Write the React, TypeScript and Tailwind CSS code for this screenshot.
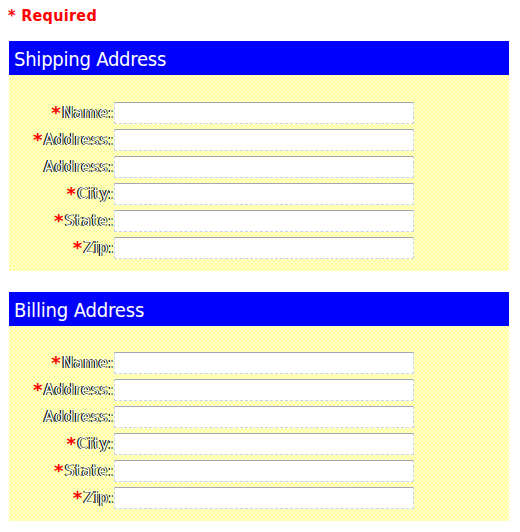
type Field = { label: string; required: boolean; spacing: string };

const fields: Field[] = [
  { label: "Name:", required: true, spacing: "tracking-[0.9px]" },
  { label: "Address:", required: true, spacing: "tracking-[1px]" },
  { label: "Address:", required: false, spacing: "tracking-[1px]" },
  { label: "City:", required: true, spacing: "tracking-[0.9px]" },
  { label: "State:", required: true, spacing: "tracking-[1px]" },
  { label: "Zip:", required: true, spacing: "tracking-[0.6px]" },
];

function AddressSection({ title, first }: { title: string; first?: boolean }) {
  return (
    <section className="w-[500px] bg-[#ffffa9]">
      <h2 className={`h-[34px] bg-[#0000ff] pl-[5px] pt-px font-['DejaVu_Sans_Condensed','Noto_Sans',sans-serif] text-[20px] leading-[34px] text-white ${first ? "tracking-[-0.23px]" : "tracking-[-0.15px]"}`}>
        {title}
      </h2>
      <div
        className={`flex flex-col gap-[5px] bg-[repeating-conic-gradient(#ffff99_0_25%,#ffffd0_0_50%)] bg-size-[4px_4px] pb-[12px] ${first ? "pt-[27px]" : "pt-[26px]"}`}
      >
        {fields.map((field, i) => (
          <label key={i} className="flex h-[22px] items-center">
            <span className="flex w-[105px] items-center justify-end whitespace-nowrap text-[16px] leading-[22px]">
              {field.required && (
                <span className="w-[11px] font-['DejaVu_Sans',sans-serif] text-[18px] font-bold leading-[22px] text-[#ff0000]">*</span>
              )}
              <span className={`font-['DejaVu_Sans_Condensed','Noto_Sans',sans-serif] text-[#fffff0] [text-shadow:-1px_0_#000812,-1px_0_#000812,1px_0_#18343e] ${field.spacing}`}>
                {field.label}
              </span>
            </span>
            <input
              type="text"
              className="h-[22px] w-[300px] rounded-[1px] border border-dashed border-[#c5d3e8] border-t-[#a3a7b5] bg-white px-1 outline-none [border-top-style:solid]"
            />
          </label>
        ))}
      </div>
    </section>
  );
}

export default function App() {
  return (
    <main className="h-[532px] w-[520px] overflow-hidden bg-white pl-[8px] font-['Noto_Sans',sans-serif]">
      <p className="h-[41px] pt-[4px] font-['DejaVu_Sans_Condensed','Noto_Sans',sans-serif] text-[16px] font-bold leading-[23px] tracking-[0.3px] text-[#ff0000]">* Required</p>
      <div className="flex flex-col gap-[21px] pl-px">
        <AddressSection title="Shipping Address" first />
        <AddressSection title="Billing Address" />
      </div>
    </main>
  );
}
